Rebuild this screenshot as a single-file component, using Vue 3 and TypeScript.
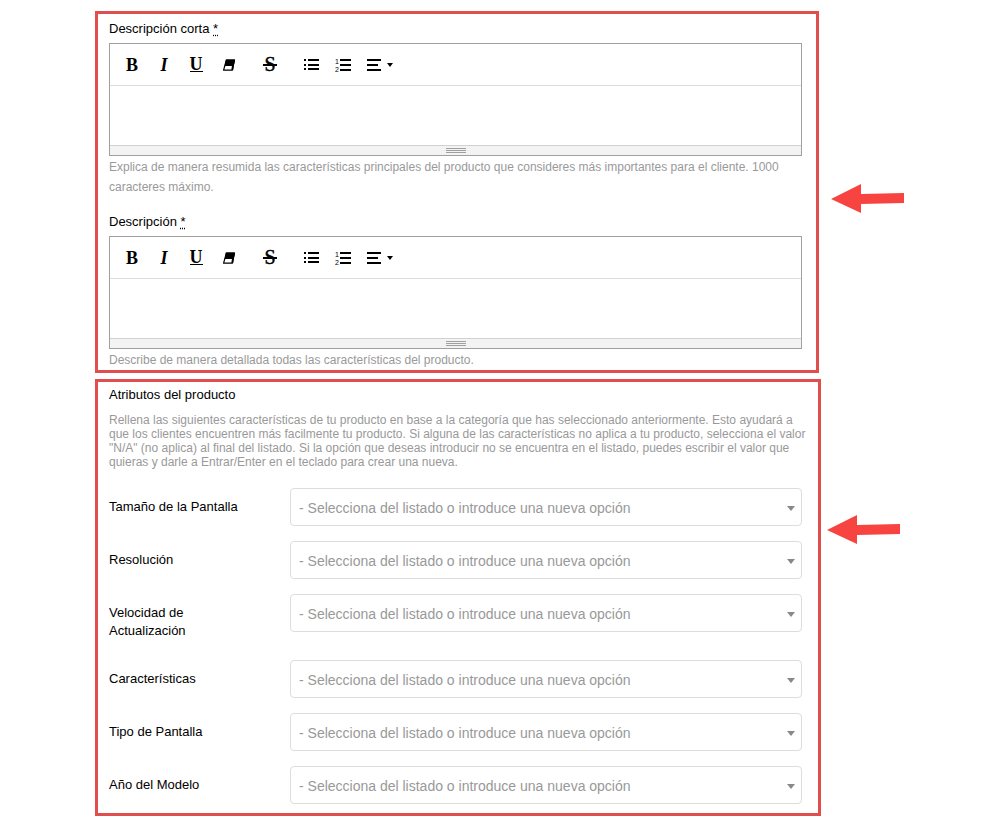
<script setup lang="ts">
import { ref } from 'vue'

interface Editor {
  id: string
  label: string
  help: string
}

interface Attribute {
  id: string
  label: string
}

const editors: Editor[] = [
  {
    id: 'descripcion-corta',
    label: 'Descripción corta',
    help: 'Explica de manera resumida las características principales del producto que consideres más importantes para el cliente. 1000 caracteres máximo.',
  },
  {
    id: 'descripcion',
    label: 'Descripción',
    help: 'Describe de manera detallada todas las características del producto.',
  },
]

const attributes: Attribute[] = [
  { id: 'tamano', label: 'Tamaño de la Pantalla' },
  { id: 'resolucion', label: 'Resolución' },
  { id: 'velocidad', label: 'Velocidad de Actualización' },
  { id: 'caracteristicas', label: 'Características' },
  { id: 'tipo', label: 'Tipo de Pantalla' },
  { id: 'ano', label: 'Año del Modelo' },
]

const texts = ref<Record<string, string>>({})
const values = ref<Record<string, string>>(
  Object.fromEntries(attributes.map((a) => [a.id, ''])),
)
</script>

<template>
  <main class="page">
    <div class="row">
      <section class="box box-editors">
        <div v-for="e in editors" :key="e.id" class="field">
          <label class="label" :for="e.id">{{ e.label }} <abbr class="req">*</abbr></label>
          <div class="editor">
            <div class="toolbar">
              <div class="group">
                <button type="button" class="tool">
                  <svg width="20" height="20"><text class="glyph" x="10" y="16">B</text></svg>
                </button>
                <button type="button" class="tool">
                  <svg width="20" height="20"><text class="glyph italic" x="10" y="16">I</text></svg>
                </button>
                <button type="button" class="tool">
                  <svg width="20" height="20">
                    <text class="glyph" x="10" y="15">U</text>
                    <rect x="4" y="16" width="13" height="1" />
                  </svg>
                </button>
                <button type="button" class="tool">
                  <svg width="20" height="20">
                    <path d="M8.4 5H16.4L14.4 15.2H5.6Z" fill="#fff" stroke="#000" stroke-width="1.2" stroke-linejoin="round" />
                    <path d="M7.9 4.4H17.1L15.6 11H6.6Z" />
                    <path d="M15.9 5L14.2 15" stroke="#000" stroke-width="1.8" />
                  </svg>
                </button>
              </div>
              <div class="group">
                <button type="button" class="tool">
                  <svg width="28" height="28">
                    <text class="glyph strike" x="15" y="20">S</text>
                    <rect x="8" y="13" width="14" height="2" />
                  </svg>
                </button>
              </div>
              <div class="group">
                <button type="button" class="tool">
                  <svg width="20" height="20">
                    <path d="M4 4h2v2H4zM4 9h2v2H4zM4 13h2v2H4zM8 4h11v2H8zM8 9h11v2H8zM8 13h11v2H8z" />
                  </svg>
                </button>
                <button type="button" class="tool">
                  <svg width="20" height="20">
                    <text class="num" x="3" y="9">1</text>
                    <text class="num" x="3" y="17">2</text>
                    <path d="M8 4h11v2H8zM8 9h11v2H8zM8 14h11v2H8z" />
                  </svg>
                </button>
                <button type="button" class="tool wide">
                  <svg width="32" height="20">
                    <path d="M3 4h14v2H3zM3 9h11v2H3zM3 14h14v2H3zM23 8h6l-3 4z" />
                  </svg>
                </button>
              </div>
            </div>
            <textarea :id="e.id" v-model="texts[e.id]" class="body"></textarea>
            <div class="status"><span class="grip"></span></div>
          </div>
          <p class="help">{{ e.help }}</p>
        </div>
      </section>
      <svg class="arrow" width="73" height="30" viewBox="0 0 73 30">
        <path d="M0 15L30 0V10L73 9V19L30 20V29Z" />
      </svg>
    </div>

    <div class="row row-attributes">
      <section class="box box-attributes">
        <h2 class="title">Atributos del producto</h2>
        <p class="intro">
          Rellena las siguientes características de tu producto en base a la categoría que has
          seleccionado anteriormente. Esto ayudará a que los clientes encuentren más facilmente tu
          producto. Si alguna de las características no aplica a tu producto, selecciona el valor
          "N/A" (no aplica) al final del listado. Si la opción que deseas introducir no se encuentra
          en el listado, puedes escribir el valor que quieras y darle a Entrar/Enter en el teclado
          para crear una nueva.
        </p>
        <div class="attributes">
          <div v-for="a in attributes" :key="a.id" class="attribute">
            <label class="attribute-label" :for="a.id">{{ a.label }}</label>
            <div class="select">
              <select :id="a.id" v-model="values[a.id]">
                <option value="">- Selecciona del listado o introduce una nueva opción</option>
              </select>
              <span class="caret"></span>
            </div>
          </div>
        </div>
      </section>
      <svg class="arrow" width="73" height="30" viewBox="0 0 73 30">
        <path d="M0 15L30 0V10L73 9V19L30 20V29Z" />
      </svg>
    </div>
  </main>
</template>

<style>
body {
  background: #fff;
}
</style>

<style scoped>
.page {
  box-sizing: border-box;
  display: flex;
  flex-direction: column;
  gap: 6px;
  padding: 11px 80px 7px 95px;
  font-family: 'Liberation Sans', Arial, sans-serif;
  font-size: 13px;
  color: #000;
}

.row {
  display: flex;
  align-items: flex-start;
  gap: 12px;
}

.row-attributes {
  gap: 6px;
  padding-right: 4px;
}

.box {
  box-sizing: border-box;
  flex: 1;
  min-width: 0;
  border: 3px solid #e04f4d;
}

.box-editors {
  display: flex;
  flex-direction: column;
  gap: 15px;
  padding: 5px 14px 0 11px;
}

.box-attributes {
  padding: 3px 16px 9px 11px;
}

.arrow {
  flex: none;
  margin-top: 173px;
  fill: #f74440;
}

.row-attributes .arrow {
  margin-top: 136px;
}

.label {
  display: block;
  margin-bottom: 4px;
  line-height: 20px;
}

.req {
  text-decoration: underline dotted;
  text-underline-offset: 2px;
}

.editor {
  border: 1px solid #a0a0a0;
}

.toolbar {
  display: flex;
  gap: 9px;
  padding: 5px 6px 4px;
  border-bottom: 1px solid #ddd;
}

.group {
  display: flex;
}

.tool {
  display: flex;
  align-items: center;
  justify-content: center;
  width: 32px;
  height: 32px;
  padding: 0;
  border: 0;
  background: none;
}

.wide {
  width: 44px;
}

.glyph {
  font: bold 18px 'Liberation Serif', 'Times New Roman', serif;
  text-anchor: middle;
}

.italic {
  font-style: italic;
}

.strike {
  font-size: 20px;
  font-weight: 400;
  stroke: #000;
  stroke-width: 0.5px;
}

.num {
  font: 7px 'Liberation Sans', Arial, sans-serif;
}

.body {
  display: block;
  box-sizing: border-box;
  width: 100%;
  height: 59px;
  padding: 8px;
  border: 0;
  outline: 0;
  resize: none;
  background: #fff;
  font: inherit;
}

.status {
  display: flex;
  align-items: center;
  justify-content: center;
  height: 9px;
  border-top: 1px solid #d2d2d2;
  background: #f3f3f3;
}

.grip {
  box-sizing: border-box;
  width: 20px;
  height: 5px;
  border: solid #a0a0a0;
  border-width: 1px 0;
  background: linear-gradient(#a0a0a0, #a0a0a0) center / 100% 1px no-repeat;
}

.help {
  margin: 1px 0 0;
  font-size: 12px;
  line-height: 20px;
  color: #999;
}

.title {
  margin: 0 0 8px;
  font-size: 13px;
  font-weight: 400;
  line-height: 20px;
}

.intro {
  margin: 0 -8px 19px 0;
  font-size: 12px;
  line-height: 14px;
  color: #999;
}

.attributes {
  display: flex;
  flex-direction: column;
  gap: 15px;
}

.attribute {
  display: grid;
  grid-template-columns: 141px 1fr;
  column-gap: 40px;
  align-items: start;
}

.attribute-label {
  padding: 10px 0 5px;
  line-height: 18px;
}

.select {
  position: relative;
}

.select select {
  display: block;
  box-sizing: border-box;
  width: 100%;
  height: 38px;
  padding: 2px 28px 0 8px;
  border: 1px solid #ddd;
  border-radius: 4px;
  appearance: none;
  background: #fff;
  font: 14px 'Liberation Sans', Arial, sans-serif;
  color: #999;
}

.caret {
  position: absolute;
  top: 18px;
  right: 7px;
  border: solid transparent;
  border-width: 5px 4px 0;
  border-top-color: #888;
  pointer-events: none;
}
</style>
